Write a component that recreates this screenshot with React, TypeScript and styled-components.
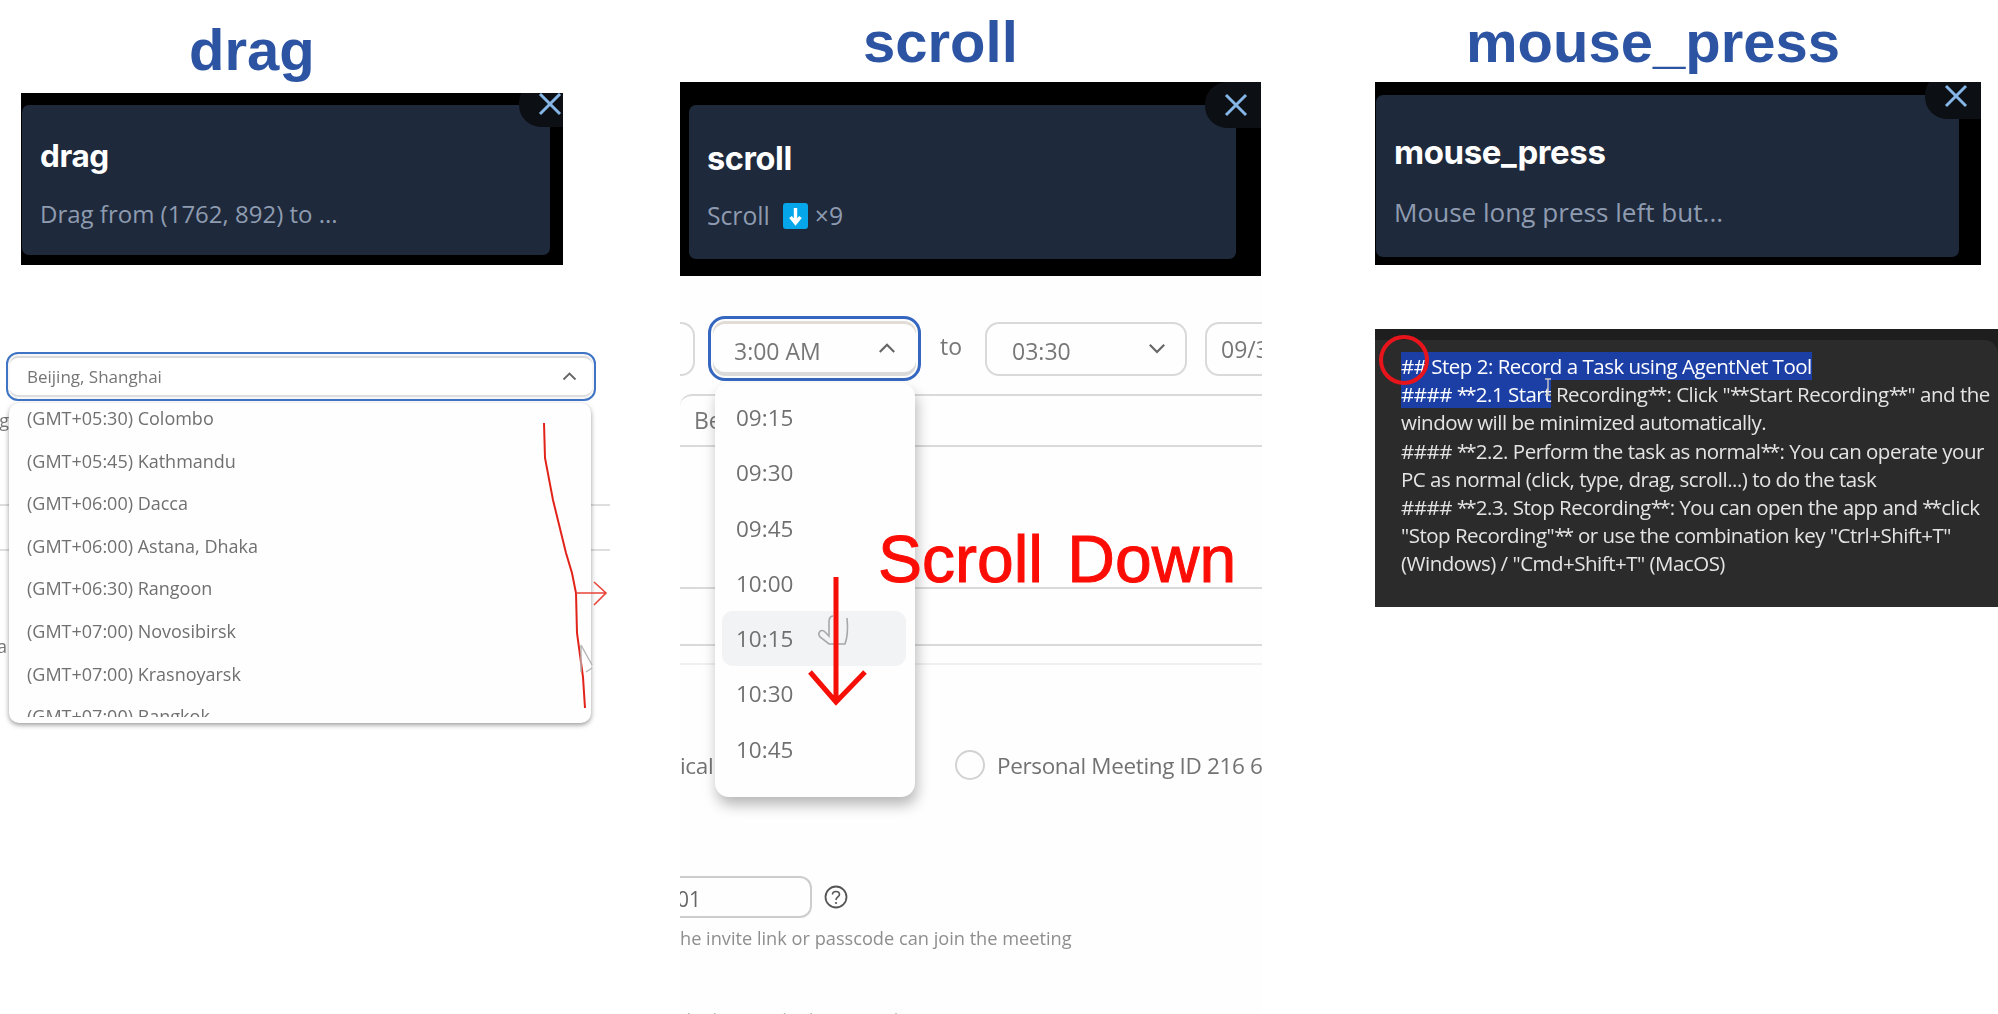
import React from 'react';
import styled, {createGlobalStyle} from 'styled-components';

const Global = createGlobalStyle`
	* {
		box-sizing: border-box;
		margin: 0;
	}
	html, body {
		background: white;
		overflow: hidden;
	}
	body {
		font-family: 'Open Sans', 'Noto Sans', sans-serif;
	}
`;

const Page = styled.div`
	display: flex;
	width: 1998px;
	height: 1014px;
	overflow: hidden;
`;

const Column = styled.section<{$width: number}>`
	position: relative;
	display: flex;
	flex-direction: column;
	flex: none;
	width: ${p => p.$width}px;
	height: 1014px;
`;

const Heading = styled.h1<{$height: number; $left: number; $drop: number}>`
	height: ${p => p.$height}px;
	padding: ${p => p.$drop}px 0 0 ${p => p.$left}px;
	font-family: 'Liberation Sans', Arial, sans-serif;
	font-size: 58px;
	font-weight: 700;
	line-height: ${p => p.$height}px;
	color: #2c54a3;
	white-space: nowrap;
`;

const Panel = styled.div<{$left: number; $width: number; $height: number; $pad: string}>`
	position: relative;
	flex: none;
	width: ${p => p.$width}px;
	height: ${p => p.$height}px;
	margin-left: ${p => p.$left}px;
	padding: ${p => p.$pad};
	background: black;
	overflow: hidden;
`;

const Card = styled.div<{$height: number; $pad: number}>`
	height: ${p => p.$height}px;
	padding: ${p => p.$pad}px 18px 0 18px;
	border-radius: 7px;
	background: #1e293b;
`;

const CardTitle = styled.h3<{$size: number}>`
	font-family: 'Inter', 'Open Sans', sans-serif;
	font-size: ${p => p.$size}px;
	font-weight: 700;
	line-height: 38px;
	letter-spacing: -0.4px;
	color: white;
`;

const CardText = styled.p<{$mt: number; $size: number}>`
	display: flex;
	align-items: center;
	margin-top: ${p => p.$mt}px;
	font-size: ${p => p.$size}px;
	line-height: 32px;
	color: #8e9bb0;
	white-space: nowrap;
`;

const KeyEmoji = styled.svg`
	margin: 0 7px 0 13px;
`;

const CloseBubble = styled.div<{$top: number; $right: number}>`
	position: absolute;
	top: ${p => p.$top}px;
	right: ${p => p.$right}px;
	display: flex;
	align-items: center;
	justify-content: center;
	width: 56px;
	height: 46px;
	padding-left: 6px;
	border-radius: 22px 0 0 22px;
	background: #0c0f13;
`;

function CloseIcon() {
	return (
		<svg width="24" height="24" viewBox="0 0 24 24">
			<path d="M2 2 L22 22 M22 2 L2 22" stroke="#86b6e6" strokeWidth="3" fill="none" />
		</svg>
	);
}

type StepCardProps = {
	title: string;
	titleSize: number;
	textSize: number;
	height: number;
	pad: number;
	mt: number;
	bubbleTop: number;
	bubbleRight: number;
};

function StepCard({title, titleSize, textSize, height, pad, mt, bubbleTop, bubbleRight, children}: React.PropsWithChildren<StepCardProps>) {
	return (
		<>
			<Card $height={height} $pad={pad}>
				<CardTitle $size={titleSize}>{title}</CardTitle>
				<CardText $mt={mt} $size={textSize}>{children}</CardText>
			</Card>
			<CloseBubble $top={bubbleTop} $right={bubbleRight}><CloseIcon /></CloseBubble>
		</>
	);
}

// soft look of the video frames
const Video = styled.div`
	filter: blur(0.45px);
`;

const Annotation = styled.svg`
	position: absolute;
	left: 0;
	top: 0;
	pointer-events: none;
	overflow: visible;
`;

/* ---- drag ---- */

const ZoneScene = styled(Video)`
	position: relative;
	width: 610px;
	margin-top: 87px;
	background: white;
`;

const ZoneTrigger = styled.div`
	display: flex;
	align-items: center;
	justify-content: space-between;
	width: 590px;
	height: 49px;
	margin-left: 6px;
	padding: 0 17px 0 19px;
	border: 2px solid #3f74c4;
	border-radius: 12px;
	box-shadow: inset 0 0 0 2px #f6f6f6, inset 0 -3px 0 1px #dedede, inset 0 3px 0 1px #dadada;
	font-size: 17px;
	color: #757575;
`;

const ZoneBack = styled.div`
	height: 329px;
	font-size: 18px;
	color: #777;
	overflow: hidden;
`;

const BackLine = styled.div<{$mt: number}>`
	height: 2px;
	margin-top: ${p => p.$mt}px;
	background: #dedede;
`;

const BackWord = styled.div<{$mt: number; $width: number}>`
	display: flex;
	justify-content: flex-end;
	width: ${p => p.$width}px;
	height: 24px;
	margin-top: ${p => p.$mt}px;
	line-height: 24px;
	overflow: hidden;
`;

const BackStrip = styled.div`
	width: 113px;
	height: 3px;
	margin-top: 72px;
	background: #e6e6e6;
`;

const ZoneList = styled.div`
	position: absolute;
	left: 9px;
	top: 51px;
	width: 582px;
	height: 320px;
	border-radius: 10px;
	background: #fdfefd;
	box-shadow: 0 2px 5px rgba(0,0,0,0.4);
	overflow: hidden;
`;

const ZoneScroll = styled.div`
	height: 314px;
	overflow: hidden;
`;

const ZoneItem = styled.div`
	height: 42.6px;
	padding-left: 18px;
	font-size: 18px;
	line-height: 30px;
	color: #707070;
	white-space: nowrap;
`;

const zones = [
	'(GMT+05:30) Colombo',
	'(GMT+05:45) Kathmandu',
	'(GMT+06:00) Dacca',
	'(GMT+06:00) Astana, Dhaka',
	'(GMT+06:30) Rangoon',
	'(GMT+07:00) Novosibirsk',
	'(GMT+07:00) Krasnoyarsk',
	'(GMT+07:00) Bangkok',
];

/* ---- scroll ---- */

const TimeScene = styled(Video)`
	position: relative;
	width: 582px;
	height: 738px;
	background: #fefefe;
	overflow: hidden;
`;

const TimeRow = styled.div`
	display: flex;
	align-items: center;
	height: 65px;
	margin-top: 40px;
	font-size: 23px;
	color: #777;
`;

const Select = styled.div<{$width: number; $ml: number; $padLeft: number}>`
	display: flex;
	flex: none;
	align-items: center;
	justify-content: space-between;
	width: ${p => p.$width}px;
	height: 54px;
	margin-left: ${p => p.$ml}px;
	padding: 0 19px 0 ${p => p.$padLeft}px;
	border: 2px solid #d9d9d9;
	border-radius: 14px;
	white-space: nowrap;
`;

const SelectValue = styled.span`
	margin-top: 4px;
`;

const SelectStub = styled.div`
	flex: none;
	width: 15px;
	height: 54px;
	border: 2px solid #d9d9d9;
	border-left: 0;
	border-radius: 0 14px 14px 0;
`;

const ActiveSelect = styled.div`
	display: flex;
	flex: none;
	align-items: center;
	justify-content: space-between;
	width: 213px;
	height: 65px;
	margin-left: 13px;
	padding: 0 22px 0 23px;
	border: 3px solid #3567c0;
	border-radius: 17px;
	box-shadow: inset 0 0 0 2px #fcfcfc, inset 0 -4px 0 2px #dadada, inset 0 3px 0 2px #e2dcd6;
`;

const ToLabel = styled.span`
	margin: -6px 0 0 19px;
`;

const SectionBox = styled.div`
	height: 53px;
	margin-top: 13px;
	padding-left: 14px;
	border-top: 2px solid #dadada;
	border-bottom: 2px solid #dadada;
	border-top-left-radius: 12px;
	font-size: 23px;
	line-height: 49px;
	color: #777;
`;

const Rule = styled.div<{$mt: number; $color?: string}>`
	height: 2px;
	margin-top: ${p => p.$mt}px;
	background: ${p => p.$color ?? '#dadada'};
`;

const MeetingRow = styled.div`
	display: flex;
	align-items: center;
	height: 34px;
	margin-top: 83px;
	font-size: 22.5px;
	letter-spacing: -0.35px;
	color: #727272;
	white-space: nowrap;
`;

const ClippedWord = styled.span`
	flex: none;
	width: 274px;
`;

const Radio = styled.span`
	flex: none;
	width: 30px;
	height: 30px;
	margin-left: 1px;
	border: 2px solid #d2d2d2;
	border-radius: 50%;
`;

const RadioLabel = styled.span`
	margin-left: 12px;
`;

const PasscodeRow = styled.div`
	display: flex;
	align-items: center;
	height: 42px;
	margin-top: 94px;
	gap: 12px;
`;

const PasscodeInput = styled.div`
	width: 132px;
	height: 42px;
	border: 2px solid #cdcdcd;
	border-left: 0;
	border-radius: 0 12px 12px 0;
	font-size: 21px;
	line-height: 42px;
	text-indent: -3px;
	color: #666;
`;

const Hint = styled.p`
	margin-top: 7px;
	font-size: 18.2px;
	line-height: 26px;
	color: #8e8e8e;
	white-space: nowrap;
`;

const ClippedHint = styled(Hint)`
	margin-top: 56px;
	color: #b5b5b5;
`;

const TimeMenu = styled.div`
	position: absolute;
	left: 35px;
	top: 107px;
	width: 200px;
	height: 414px;
	padding: 7px 9px 0 7px;
	border-radius: 14px;
	background: #fefefe;
	box-shadow: 2px 8px 14px rgba(0,0,0,0.28);
`;

const TimeItem = styled.div<{$hover?: boolean}>`
	height: 55.3px;
	padding-left: 14px;
	border-radius: 11px;
	background: ${p => (p.$hover ? '#f2f3f5' : 'transparent')};
	font-size: 22.5px;
	line-height: 55px;
	color: #707070;
`;

const times = ['09:15', '09:30', '09:45', '10:00', '10:15', '10:30', '10:45'];

const ScrollLabel = styled.div`
	position: absolute;
	left: 198px;
	top: 247px;
	font-family: 'Liberation Sans', sans-serif;
	font-size: 66px;
	line-height: 72px;
	word-spacing: 6px;
	-webkit-text-stroke: 1px #fb0d05;
	color: #fb0d05;
	white-space: nowrap;
`;

/* ---- mouse_press ---- */

const EditorPane = styled(Video)`
	position: relative;
	width: 623px;
	height: 278px;
	margin-top: 64px;
	padding-top: 11px;
	background: #1e1e1e;
`;

const EditorBody = styled.div`
	height: 267px;
	padding: 12px 0 0 26px;
	border-top-right-radius: 14px;
	background: #2b2b2b;
	font-size: 20.5px;
	font-weight: 500;
	line-height: 28.2px;
	letter-spacing: -0.5px;
	color: #e4e4e4;
	white-space: nowrap;
`;

const Line = styled.div``;

const Picked = styled.span`
	background: #1c3fa6;
	color: white;
`;

// the asterisks of the markdown are tighter in the recording
const Stars = styled.span`
	letter-spacing: -2.8px;
	padding-right: 2px;
`;

function Chevron({up, size = 20}: {up?: boolean; size?: number}) {
	return (
		<svg width={size} height={size * 0.6} viewBox="0 0 20 12">
			<path d={up ? 'M2 10 L10 2 L18 10' : 'M2 2 L10 10 L18 2'} stroke="#666" strokeWidth="2.4" fill="none" />
		</svg>
	);
}

function HelpIcon() {
	return (
		<svg width="24" height="24" viewBox="0 0 24 24">
			<circle cx="12" cy="12" r="10.5" stroke="#555" strokeWidth="1.8" fill="none" />
			<path d="M8.5 9.5 C8.5 5.5 15.5 5.5 15.5 9.5 C15.5 12 12 12 12 15" stroke="#555" strokeWidth="1.6" fill="none" />
			<circle cx="12" cy="18" r="1.1" fill="#555" />
		</svg>
	);
}

export default function App() {
	return (
		<Page>
			<Global />

			<Column $width={680}>
				<Heading $height={93} $left={189} $drop={3}>drag</Heading>
				<Panel $left={21} $width={542} $height={172} $pad="12px 13px 0 1px">
					<StepCard title="drag" titleSize={31.5} textSize={24} height={150} pad={32} mt={23} bubbleTop={-12} bubbleRight={-12}>
						Drag from (1762, 892) to ...
					</StepCard>
				</Panel>
				<ZoneScene>
					<ZoneTrigger>
						Beijing, Shanghai
						<Chevron up size={15} />
					</ZoneTrigger>
					<ZoneBack>
						<BackWord $mt={7} $width={9}>Timing</BackWord>
						<BackLine $mt={72} />
						<BackLine $mt={43} />
						<BackWord $mt={83} $width={7}>Ja</BackWord>
						<BackStrip />
					</ZoneBack>
					<ZoneList>
						<ZoneScroll>
							{zones.map(z => <ZoneItem key={z}>{z}</ZoneItem>)}
						</ZoneScroll>
					</ZoneList>
				</ZoneScene>
				<Annotation width="680" height="1014">
					<polyline
						points="544,423 545,458 553,500 566,553 572,573 576,593 577,633 583,677 585,708"
						fill="none"
						stroke="#e2231a"
						strokeWidth="2"
					/>
					<path d="M576 593 H606 M594 582 L606 593 L594 605" fill="none" stroke="#e8453a" strokeWidth="1.6" />
					<path d="M581 645 L592 665 M581 645 V672 M586 672 L592 668" fill="none" stroke="#b5b5b5" strokeWidth="1.4" />
				</Annotation>
			</Column>

			<Column $width={695}>
				<Heading $height={82} $left={183} $drop={1}>scroll</Heading>
				<Panel $left={0} $width={581} $height={194} $pad="23px 25px 0 9px">
					<StepCard title="scroll" titleSize={32.5} textSize={24.7} height={154} pad={35} mt={22} bubbleTop={0} bubbleRight={0}>
						Scroll
						<KeyEmoji width="25" height="26" viewBox="0 0 25 26">
							<rect width="25" height="26" rx="3" fill="#05a6ea" />
							<path d="M12.5 5 V18 M7.5 14 L12.5 20 L17.5 14" stroke="white" strokeWidth="3.4" fill="none" />
						</KeyEmoji>
						×9
					</StepCard>
				</Panel>
				<TimeScene>
					<TimeRow>
						<SelectStub />
						<ActiveSelect>
							<SelectValue>3:00 AM</SelectValue>
							<Chevron up size={18} />
						</ActiveSelect>
						<ToLabel>to</ToLabel>
						<Select $width={202} $ml={23} $padLeft={25}>
							<SelectValue>03:30</SelectValue>
							<Chevron size={18} />
						</Select>
						<Select $width={120} $ml={18} $padLeft={14}>09/30/2024</Select>
					</TimeRow>
					<SectionBox>Be</SectionBox>
					<Rule $mt={140} />
					<Rule $mt={55} />
					<Rule $mt={17} $color="#f0f0f0" />
					<MeetingRow>
						<ClippedWord>icall</ClippedWord>
						<Radio />
						<RadioLabel>Personal Meeting ID 216 698 1234</RadioLabel>
					</MeetingRow>
					<PasscodeRow>
						<PasscodeInput>01</PasscodeInput>
						<HelpIcon />
					</PasscodeRow>
					<Hint>he invite link or passcode can join the meeting</Hint>
					<ClippedHint>the host and others join the meeting</ClippedHint>

					<TimeMenu>
						{times.map(t => <TimeItem key={t} $hover={t === '10:15'}>{t}</TimeItem>)}
					</TimeMenu>
					<ScrollLabel>Scroll Down</ScrollLabel>
					<Annotation width="582" height="738">
						<path
							d="M153 340 C148 340 149 348 149 352 L149 360 L145 356 C141 352 137 357 140 361 L149 368 H165 C168 360 168 352 167 342"
							fill="none"
							stroke="#a8a8a8"
							strokeWidth="1.6"
						/>
						<path d="M156 301 V424 M130 396 L156 426 L185 396" fill="none" stroke="#f50f06" strokeWidth="5" />
					</Annotation>
				</TimeScene>
			</Column>

			<Column $width={623}>
				<Heading $height={82} $left={91} $drop={1}>mouse_press</Heading>
				<Panel $left={0} $width={606} $height={183} $pad="13px 22px 0 1px">
					<StepCard title="mouse_press" titleSize={33} textSize={26.1} height={162} pad={38} mt={25} bubbleTop={-9} bubbleRight={0}>
						Mouse long press left but...
					</StepCard>
				</Panel>
				<EditorPane>
					<EditorBody>
						<Line><Picked>## Step 2: Record a Task using AgentNet Tool</Picked></Line>
						<Line><Picked>#### <Stars>**</Stars>2.1 Start</Picked> Recording<Stars>**</Stars>: Click "<Stars>**</Stars>Start Recording<Stars>**</Stars>" and the</Line>
						<Line>window will be minimized automatically.</Line>
						<Line>#### <Stars>**</Stars>2.2. Perform the task as normal<Stars>**</Stars>: You can operate your</Line>
						<Line>PC as normal (click, type, drag, scroll...) to do the task</Line>
						<Line>#### <Stars>**</Stars>2.3. Stop Recording<Stars>**</Stars>: You can open the app and <Stars>**</Stars>click</Line>
						<Line>"Stop Recording"<Stars>**</Stars> or use the combination key "Ctrl+Shift+T"</Line>
						<Line>(Windows) / "Cmd+Shift+T" (MacOS)</Line>
					</EditorBody>
					<Annotation width="623" height="278">
						<ellipse cx="29" cy="31" rx="23" ry="23" fill="none" stroke="#e8141c" strokeWidth="4" />
						<path d="M170 50 H176 M173 50 V66 M170 66 H176" fill="none" stroke="#c9c9c9" strokeWidth="1.4" />
					</Annotation>
				</EditorPane>
			</Column>
		</Page>
	);
}
